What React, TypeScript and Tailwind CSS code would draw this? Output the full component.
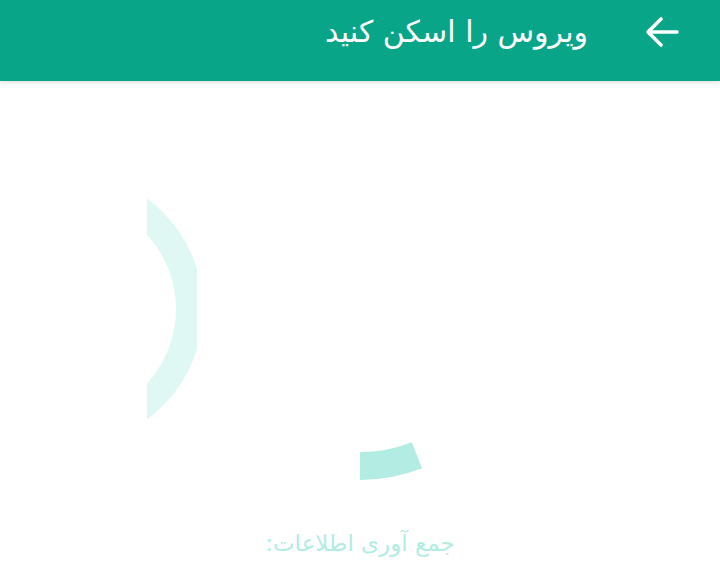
const ScanRing = () => (
  <svg width="720" height="420" viewBox="0 0 720 420" className="block">
    <defs>
      <clipPath id="ringClip">
        <rect x="147" y="0" width="50" height="420" />
      </clipPath>
    </defs>
    {/* faint outer ring, cropped */}
    <circle
      cx="66"
      cy="228"
      r="123.5"
      fill="none"
      stroke="#e0f8f4"
      strokeWidth="27"
      clipPath="url(#ringClip)"
    />
    {/* progress arc */}
    <path
      d="M360 399 A170 170 0 0 0 422 387.3 L411.8 361.2 A142 142 0 0 1 360 371 Z"
      fill="#b2ece2"
    />
  </svg>
);

export default function App() {
  return (
    <div
      dir="rtl"
      className="w-[720px] h-[588px] bg-white overflow-hidden"
      style={{ fontFamily: "'DejaVu Sans', 'Noto Sans', sans-serif" }}
    >
      <header className="h-[81px] bg-[#08a589] flex items-start pt-[12px] pr-[38px] shadow-[0_2px_4px_rgba(0,0,0,0.12)] relative z-10">
        <button className="w-[40px] h-[40px] flex items-center justify-center text-white">
          <svg width="34" height="32" viewBox="0 0 34 32" fill="none">
            <path
              d="M32 16H3M16 3L3 16l13 13"
              stroke="currentColor"
              strokeWidth="3.6"
              strokeLinecap="round"
              strokeLinejoin="round"
            />
          </svg>
        </button>
        <h1 className="mr-[54px] text-white text-[30px] leading-[40px]">
          ویروس را اسکن کنید
        </h1>
      </header>

      <ScanRing />

      <p className="mt-[22px] text-center text-[23px] text-[#b3ece2] leading-[40px]">
        جمع آوری اطلاعات:
      </p>
    </div>
  );
}
